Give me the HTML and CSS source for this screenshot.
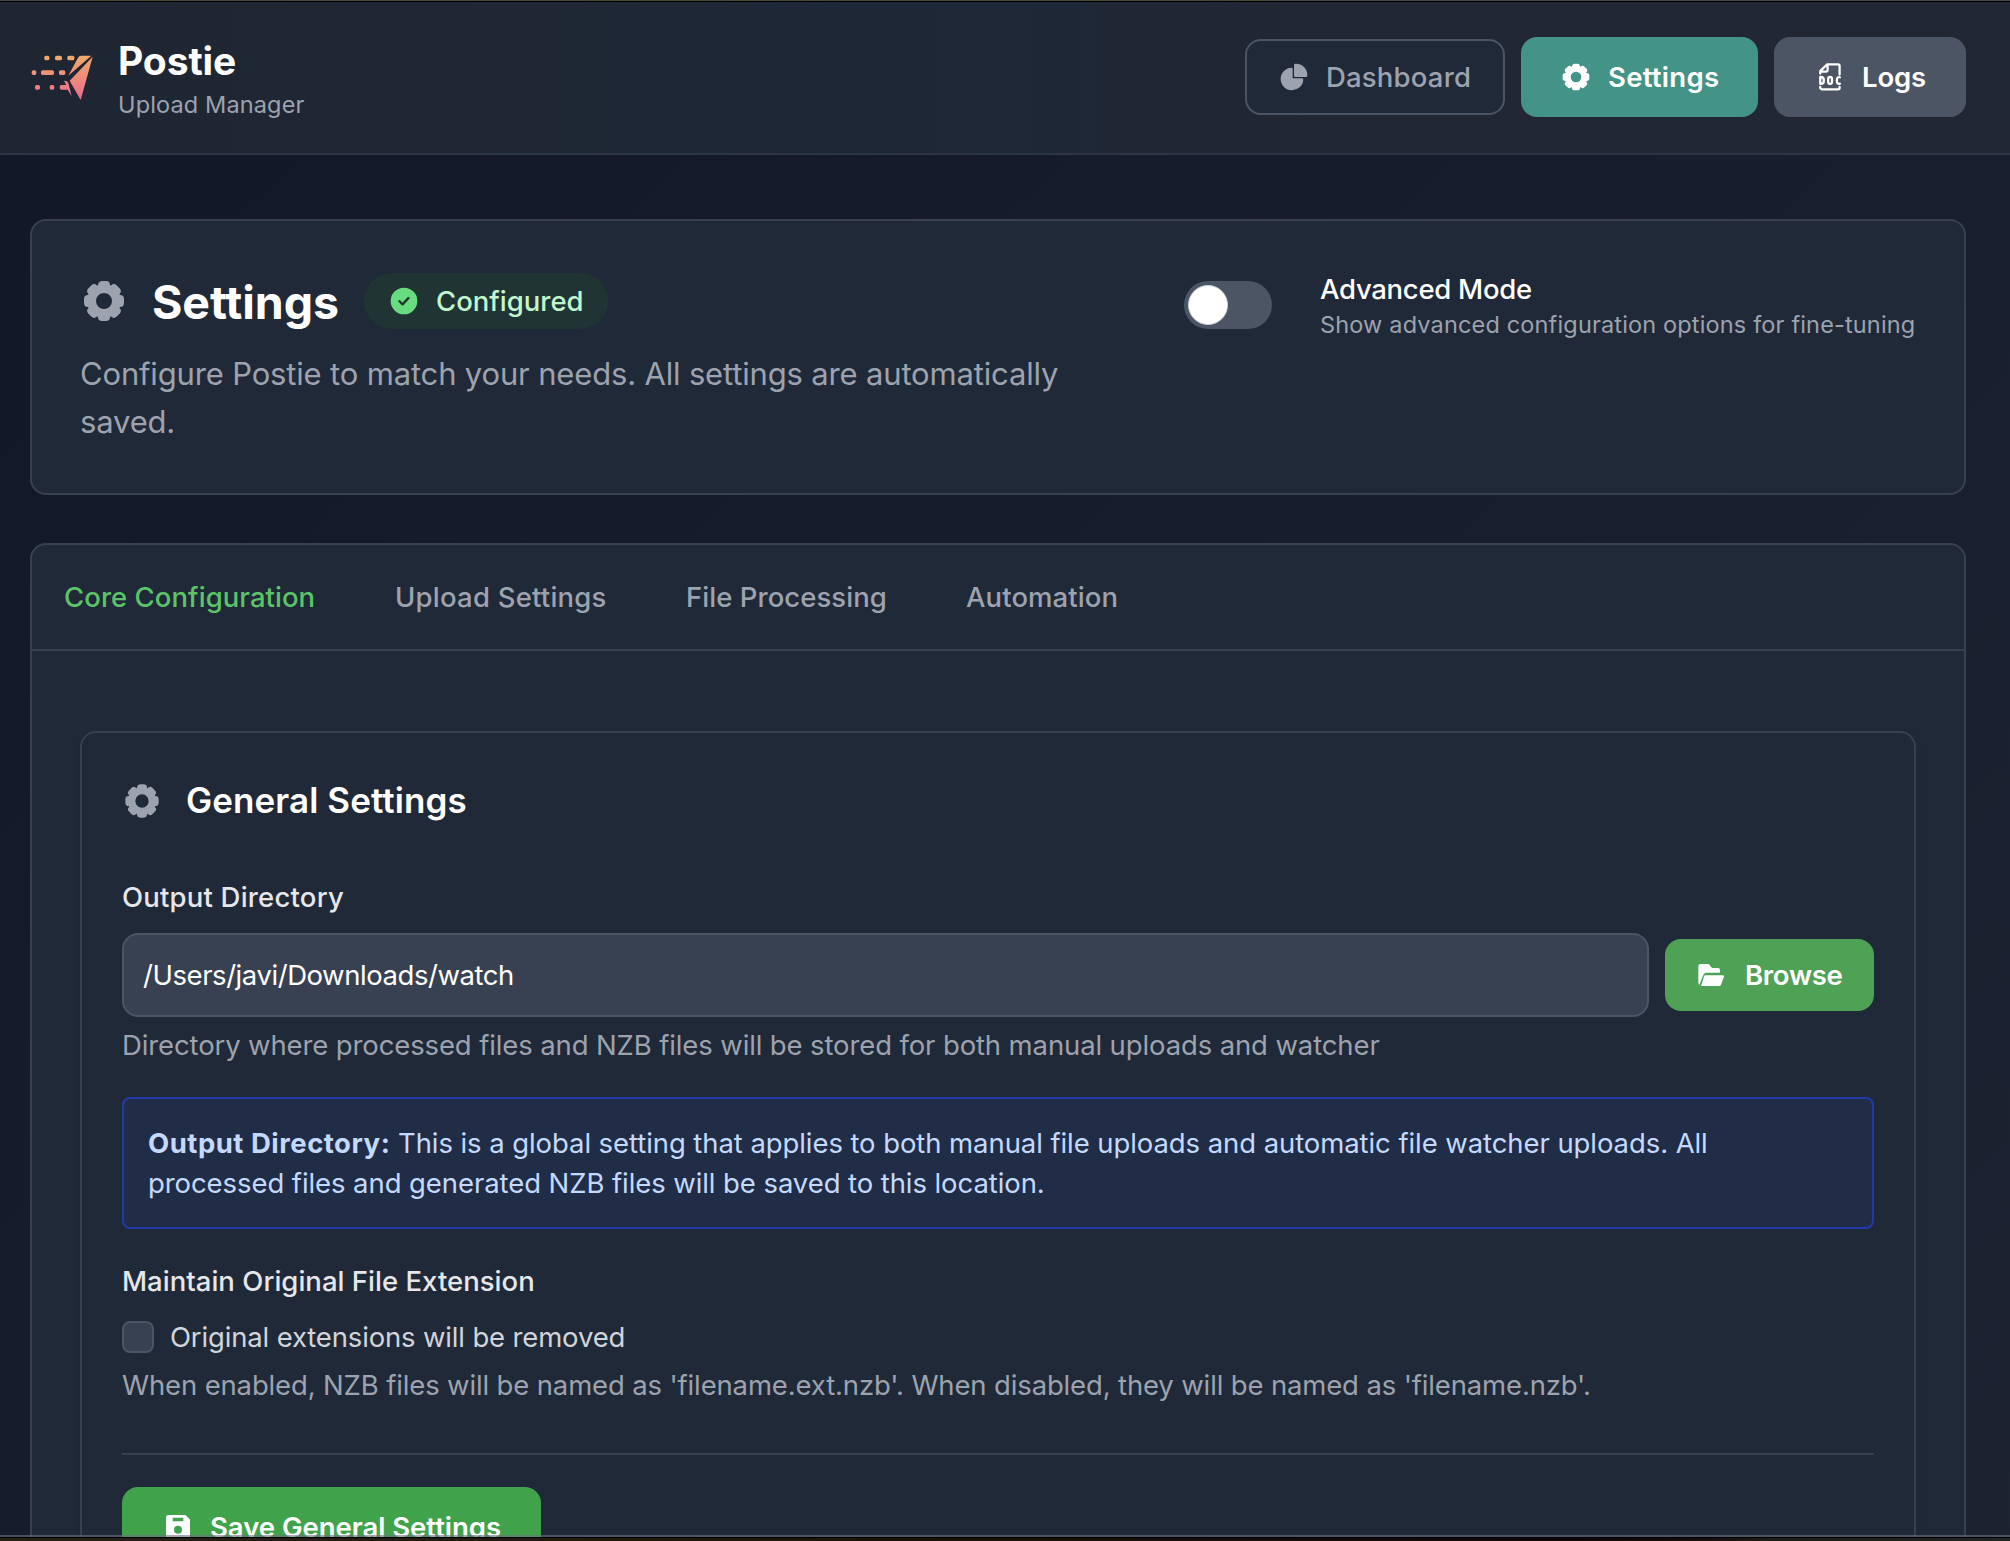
FILE: index.html
```html
<!DOCTYPE html>
<html lang="en">
<head>
<meta charset="utf-8">
<title>Postie</title>
<link rel="stylesheet" href="styles.css">
</head>
<body>
<svg width="0" height="0" class="defs">
  <symbol id="cog" viewBox="0 0 24 24"><path fill="currentColor" fill-rule="evenodd" d="M9.586 2.586A2 2 0 0 1 11 2h2a2 2 0 0 1 2 2v.089l.473.196.063-.063a2.002 2.002 0 0 1 2.828 0l1.414 1.414a2 2 0 0 1 0 2.827l-.063.064.196.473H20a2 2 0 0 1 2 2v2a2 2 0 0 1-2 2h-.089l-.196.473.063.063a2.002 2.002 0 0 1 0 2.828l-1.414 1.414a2 2 0 0 1-2.828 0l-.063-.063-.473.196V20a2 2 0 0 1-2 2h-2a2 2 0 0 1-2-2v-.089l-.473-.196-.063.063a2.002 2.002 0 0 1-2.828 0l-1.414-1.414a2 2 0 0 1 0-2.827l.063-.064L4.089 15H4a2 2 0 0 1-2-2v-2a2 2 0 0 1 2-2h.09l.195-.473-.063-.063a2 2 0 0 1 0-2.828l1.414-1.414a2 2 0 0 1 2.827 0l.064.063L9 4.089V4a2 2 0 0 1 .586-1.414ZM8 12a4 4 0 1 1 8 0 4 4 0 0 1-8 0Z"/></symbol>
</svg>
<div class="window">
  <header class="header">
    <div class="brand">
      <svg class="logo" viewBox="90 136 192 192">
        <defs><linearGradient id="sunset" gradientUnits="userSpaceOnUse" x1="0" y1="165" x2="0" y2="295"><stop offset="0" stop-color="#f1ac69"/><stop offset="1" stop-color="#ec6d8c"/></linearGradient></defs>
        <g fill="url(#sunset)">
          <rect x="133" y="168" width="15" height="14" rx="5"/><rect x="165" y="168" width="21" height="14" rx="5"/><rect x="202" y="168" width="21" height="14" rx="5"/>
          <rect x="95" y="212" width="14" height="14" rx="5"/><rect x="123" y="212" width="39" height="14" rx="5"/><rect x="177" y="212" width="19" height="14" rx="5"/>
          <rect x="105" y="256" width="15" height="14" rx="5"/><rect x="149" y="256" width="14" height="14" rx="5"/>
          <path d="M184 256h15l-7-13q10 0 13 7l10 40-12-20h-19q-5 0-5-7t5-7Z"/>
          <path d="M244 168h30L205 228l29-54q3-6 10-6Z"/><path d="M278 171 242 301 209 243Z"/>
        </g>
      </svg>
      <div>
        <div class="brand-name">Postie</div>
        <div class="brand-sub">Upload Manager</div>
      </div>
    </div>
    <nav class="nav">
      <a class="btn btn-dashboard"><svg class="icon" viewBox="0 0 24 24" fill="currentColor"><path d="M13.5 2c-.178 0-.356.013-.492.022l-.074.005a1 1 0 0 0-.934.998V11a1 1 0 0 0 1 1h7.975a1 1 0 0 0 .998-.934l.005-.074A7.04 7.04 0 0 0 22 10.5 8.5 8.5 0 0 0 13.5 2Z"/><path d="M11 6.025a1 1 0 0 0-1.065-.998 8.5 8.5 0 1 0 9.038 9.039A1 1 0 0 0 17.975 13H11V6.025Z"/></svg>Dashboard</a>
      <a class="btn btn-settings"><svg class="icon"><use href="#cog"/></svg>Settings</a>
      <a class="btn btn-logs"><svg class="icon" viewBox="0 0 24 24" fill="none" stroke="currentColor" stroke-width="1.7" stroke-linejoin="round" stroke-linecap="round"><path d="M4.7 9.4V7.6l5-5H18a1.2 1.2 0 0 1 1.2 1.2v6.4M10.2 3v4a1 1 0 0 1-1 1H5M4.7 19.4v.6a1.2 1.2 0 0 0 1.2 1.2H18a1.2 1.2 0 0 0 1.2-1.2v-.6"/><path d="M4.7 12v5.2h.5q2.2 0 2.2-2.6T5.2 12ZM19.4 12.2q-2.3-.6-2.3 2.4t2.3 2.4"/><rect x="10.6" y="12" width="2.9" height="5.2" rx="1.45"/></svg>Logs</a>
    </nav>
  </header>
  <main class="main">
    <section class="card intro">
      <div class="intro-text">
        <div class="title-row">
          <svg class="icon-xl"><use href="#cog"/></svg>
          <h1>Settings</h1>
          <div class="pill"><svg class="icon" viewBox="0 0 24 24"><circle cx="12" cy="12" r="10" fill="#68dd80"/><path d="m8.6 12.2 2.3 2.3 4.4-4.6" fill="none" stroke="#213635" stroke-width="1.8" stroke-linecap="round" stroke-linejoin="round"/></svg>Configured</div>
        </div>
        <p class="lead">Configure Postie to match your needs. All settings are automatically<br>saved.</p>
      </div>
      <div class="advanced">
        <div class="toggle"><div class="knob"></div></div>
        <div>
          <div class="adv-title">Advanced Mode</div>
          <div class="adv-sub">Show advanced configuration options for fine-tuning</div>
        </div>
      </div>
    </section>
    <section class="card panel">
      <div class="tabs">
        <a class="tab active">Core Configuration</a>
        <a class="tab tab-upload">Upload Settings</a>
        <a class="tab tab-files">File Processing</a>
        <a class="tab tab-auto">Automation</a>
      </div>
      <div class="card group">
        <div class="group-head"><svg class="icon-lg"><use href="#cog"/></svg><h2>General Settings</h2></div>
        <div class="label label-output">Output Directory</div>
        <div class="field">
          <div class="input">/Users/javi/Downloads/watch</div>
          <a class="btn btn-browse"><svg class="icon" viewBox="591 237 96 96" fill="currentColor"><path d="M602 252h21q4 0 6 3l7 9h18q6 0 6 6v8h-41q-6 0-8 5l-13 31q-3-1-3-6v-49q0-7 7-7Z"/><path d="M616 286h52q5 0 4 4l-9 24q-2 4-6 4h-54l9-28q1-4 4-4Z"/></svg>Browse</a>
        </div>
        <p class="help">Directory where processed files and NZB files will be stored for both manual uploads and watcher</p>
        <div class="note"><strong>Output Directory:</strong> This is a global setting that applies to both manual file uploads and automatic file watcher uploads. All<br>processed files and generated NZB files will be saved to this location.</div>
        <div class="label">Maintain Original File Extension</div>
        <div class="check-row"><div class="checkbox"></div>Original extensions will be removed</div>
        <p class="help help-names">When enabled, NZB files will be named as 'filename.ext.nzb'. When disabled, they will be named as 'filename.nzb'.</p>
        <div class="actions">
          <a class="btn btn-save"><svg class="icon" viewBox="0 0 24 24" fill="currentColor" fill-rule="evenodd"><path d="M5 3h12.6L21 6.4V19a2 2 0 0 1-2 2H5a2 2 0 0 1-2-2V5a2 2 0 0 1 2-2Zm3 2v2.6h8V5Zm4 6a3 3 0 1 0 0 6 3 3 0 0 0 0-6Z"/></svg>Save General Settings</a>
        </div>
      </div>
    </section>
  </main>
</div>
<div class="desktop-edge"></div>
</body>
</html>
```
FILE: styles.css
```css
* { box-sizing: border-box; }
body {
  margin: 0;
  height: 1541px;
  display: flex;
  flex-direction: column;
  overflow: hidden;
  background: #000;
  color: #fff;
  font: 400 27.5px/40px Inter, "Liberation Sans", sans-serif;
}
h1, h2, p { margin: 0; }
.defs { position: absolute; }
.icon { width: 32px; height: 32px; flex: none; }
.icon-lg { width: 40px; height: 40px; color: #9ca3af; }
.icon-xl { width: 48px; height: 48px; color: #9ca3af; }

.window {
  position: relative;
  height: 1537px;
  overflow: hidden;
  border-top: 1px solid #474b3e;
  padding-top: 1px;
}
.window::after {
  content: "";
  position: absolute;
  left: 0;
  right: 0;
  bottom: 0;
  height: 2px;
  background: rgba(107, 114, 128, 0.6);
}
.desktop-edge {
  height: 4px;
  border-top: 1px solid #000;
  background: linear-gradient(90deg, #24241a, #1e1a10 30%, #0b0705 78%, #120d08 84%, #1c1c1c 88%, #252525);
}

.header {
  height: 153px;
  display: flex;
  align-items: center;
  justify-content: space-between;
  padding: 0 44px 1px 30px;
  background: linear-gradient(90deg, #1f2632, #1e2836 50%, #212733 65%);
  border-bottom: 2px solid #2c3543;
}
.brand { display: flex; align-items: center; gap: 24px; }
.logo { width: 64px; height: 64px; }
.brand-name { font-size: 39px; font-weight: 700; line-height: 56px; letter-spacing: -0.11px; }
.brand-sub { font-size: 23.5px; line-height: 32px; letter-spacing: 0.138px; color: #9ca3af; }
.nav { display: flex; align-items: center; gap: 16px; }
.btn {
  display: flex;
  align-items: center;
  gap: 16px;
  height: 80px;
  border-radius: 16px;
  font-weight: 600;
  white-space: nowrap;
}
.btn-dashboard { width: 260px; height: 76px; padding-left: 31px; border: 2px solid #4b5563; background: #1f2937; color: #9ca3af; font-weight: 500; letter-spacing: 0.19px; }
.btn-settings { width: 237px; padding-left: 39px; background: #449387; letter-spacing: 0.29px; }
.btn-logs { width: 192px; padding-left: 40px; background: #4b5563; letter-spacing: -0.17px; }

.main {
  height: 1382px;
  overflow: hidden;
  padding: 64px 44px 0 30px;
  background: linear-gradient(135deg, #121827, #1c2331);
}
.card { border: 2px solid #374151; border-radius: 16px; background: #202937; }
.intro { height: 276px; display: flex; justify-content: space-between; padding: 48px; }
.intro-text { width: 1056px; }
.title-row { height: 64px; display: flex; align-items: center; gap: 24px; }
h1 { font-size: 46.5px; line-height: 62px; padding-top: 2px; width: 188px; letter-spacing: -0.074px; white-space: nowrap; }
.pill {
  display: flex;
  align-items: center;
  gap: 16px;
  width: 244px;
  height: 56px;
  padding-left: 24px;
  border-radius: 28px;
  background: #213434;
  color: #c0f7cf;
  font-weight: 500;
}
.lead { margin-top: 17px; font-size: 31px; line-height: 48px; letter-spacing: -0.165px; color: #9ca3af; white-space: nowrap; }
.advanced { display: flex; align-items: center; gap: 48px; width: 732px; height: 72px; white-space: nowrap; }
.toggle { width: 88px; height: 48px; flex: none; padding: 4px; border-radius: 24px; background: #4b5563; }
.knob { width: 40px; height: 40px; border: 1px solid #d1d5db; border-radius: 50%; background: #fff; }
.adv-title { font-weight: 500; letter-spacing: -0.277px; }
.adv-sub { font-size: 23.5px; line-height: 32px; letter-spacing: 0.16px; color: #9ca3af; }

.panel { margin-top: 48px; height: 1100px; }
.tabs { height: 106px; display: flex; align-items: center; padding-left: 32px; border-bottom: 2px solid #374151; color: #9ca3af; font-weight: 500; }
.tab { width: 331px; white-space: nowrap; letter-spacing: 0.05px; }
.tab-upload { width: 291px; letter-spacing: 0.22px; }
.tab-files { width: 280px; }
.tab-auto { letter-spacing: 0.09px; }
.active { color: #5cc468; }
.group { margin: 80px 48px 0; padding: 40px; height: 900px; box-shadow: 0 2px 6px rgba(0, 0, 0, 0.08); }
.group-head { display: flex; align-items: flex-start; gap: 24px; height: 56px; margin-bottom: 48px; }
.group-head .icon-lg { margin-top: 8px; }
h2 { font-size: 35px; line-height: 54px; font-weight: 600; letter-spacing: 0.08px; }
.label { color: #e5e7eb; font-weight: 500; margin-bottom: 16px; letter-spacing: 0.02px; }
.label-output { letter-spacing: 0.2px; }
.field { display: flex; align-items: center; gap: 16px; }
.input { flex: 1; height: 84px; padding: 20px 19px; border: 2px solid #4b5563; border-radius: 16px; background: #384151; letter-spacing: -0.44px; }
.btn-browse { width: 209px; height: 72px; padding-left: 32px; background: #4ea155; letter-spacing: -0.29px; }
.help { margin-top: 8px; color: #9ca3af; white-space: nowrap; letter-spacing: -0.124px; }
.help-names { letter-spacing: -0.148px; }
.note { margin: 32px 0; padding: 24px; border: 2px solid #2239ac; border-radius: 8px; background: #212c47; color: #c3dafe; white-space: nowrap; letter-spacing: -0.08px; }
.note strong { letter-spacing: 0.5px; }
.check-row { display: flex; align-items: center; gap: 16px; color: #d1d5db; letter-spacing: -0.16px; }
.checkbox { width: 32px; height: 32px; border: 2px solid #4b5563; border-radius: 8px; background: #374151; }
.actions { margin-top: 48px; padding-top: 32px; border-top: 2px solid #374151; }
.btn-save { width: 419px; padding-left: 40px; background: #40a34b; letter-spacing: -0.025px; }
```
